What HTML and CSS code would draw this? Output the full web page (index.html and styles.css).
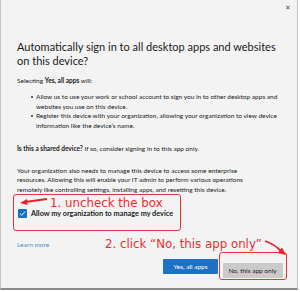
FILE: index.html
```html
<!DOCTYPE html>
<html lang="en">
<head>
    <meta charset="UTF-8">
    <title>Automatically sign in</title>
    <link rel="stylesheet" href="styles.css">
</head>
<body>
    <div class="dialog">
        <div class="close">&#x2715;</div>
        <h1 class="title">Automatically sign in to all desktop apps and websites on this device?</h1>
        <p class="intro">Selecting <b>Yes, all apps</b> will:</p>
        <ul class="points">
            <li>Allow us to use your work or school account to sign you in to other desktop apps and websites you use on this device.</li>
            <li>Register this device with your organization, allowing your organization to view device information like the device’s name.</li>
        </ul>
        <p class="shared"><b>Is this a shared device?</b> If so, consider signing in to this app only.</p>
        <p class="manage">Your organization also needs to manage this device to access some enterprise resources. Allowing this will enable your IT admin to perform various operations remotely like controlling settings, installing apps, and resetting this device.</p>

        <div class="mark-box">
            <div class="note note-one">1. uncheck the box</div>
            <svg class="arrow arrow-one" width="30" height="10" viewBox="0 0 30 10">
                <path d="M28 2 L6 5" stroke="#e8232a" stroke-width="1.8" fill="none"/>
                <path d="M1 6 L8 2 L8.5 8 Z" fill="#e8232a"/>
            </svg>
            <label class="check-row">
                <span class="checkbox">
                    <svg width="9" height="9" viewBox="0 0 9 9"><path d="M2 4.6 L3.8 6.3 L7 2.6" stroke="#fff" stroke-width="0.9" fill="none"/></svg>
                </span>
                <span class="check-label">Allow my organization to manage my device</span>
            </label>
        </div>

        <div class="link-row">
            <a class="learn">Learn more</a>
            <span class="note note-two">2. click “No, this app only”</span>
        </div>
        <svg class="arrow arrow-two" width="24" height="18" viewBox="0 0 24 18">
            <path d="M1 2 Q10 5 17 12" stroke="#e8232a" stroke-width="1.8" fill="none"/>
            <path d="M22 16 L13.5 14 L18 8.5 Z" fill="#e8232a"/>
        </svg>

        <div class="actions">
            <button class="btn btn-primary">Yes, all apps</button>
            <div class="mark-btn">
                <button class="btn btn-plain">No, this app only</button>
            </div>
        </div>
    </div>
</body>
</html>
```

FILE: styles.css
```css
body, html {
    margin: 0;
    padding: 0;
    background-color: #ffffff;
    font-family: Lato, "Noto Sans", sans-serif;
    color: #1b1b1b;
}

.dialog {
    position: relative;
    width: 298px;
    height: 290px;
    box-sizing: border-box;
    padding: 0 0 0 16px;
    background-color: #f3f3f3;
    border-left: 1px solid #c4c4c4;
    border-right: 1px solid #c4c4c4;
    border-bottom: 2px solid #8a8a8a;
    overflow: hidden;
}

.close {
    position: absolute;
    top: 3px;
    right: 6px;
    font-size: 7px;
    color: #555;
}

.title {
    margin: 40px 0 0 0;
    font-size: 11px;
    line-height: 14px;
    font-weight: 400;
    width: 270px;
}

.intro {
    margin: 8px 0 0 0;
    font-size: 6.5px;
    line-height: 10px;
}

.points {
    margin: 6px 0 0 0;
    padding-left: 19px;
    width: 250px;
    font-size: 6.5px;
    line-height: 9.7px;
    list-style: none;
}

.points li {
    position: relative;
}

.points li::before {
    content: "";
    position: absolute;
    left: -5px;
    top: 4px;
    width: 2px;
    height: 2px;
    border-radius: 50%;
    background-color: #333;
}

.shared {
    margin: 13px 0 0 0;
    font-size: 6.5px;
    line-height: 10px;
}

.manage {
    margin: 12px 0 0 0;
    font-size: 6.5px;
    line-height: 9.5px;
    width: 250px;
}

.mark-box {
    position: relative;
    margin: 0 0 0 -4px;
    width: 168px;
    height: 37px;
    box-sizing: border-box;
    border: 1.5px solid #e8353a;
    border-radius: 3px;
    padding: 1px 0 0 4px;
}

.note {
    font-family: "DejaVu Sans", sans-serif;
    color: #ee2b2f;
    font-size: 11.8px;
    line-height: 14px;
    white-space: nowrap;
}

.note-one {
    margin-left: 32px;
}

.arrow {
    position: absolute;
}

.arrow-one {
    left: 5px;
    top: 2px;
}

.check-row {
    display: flex;
    align-items: center;
    gap: 4px;
    margin-top: -1px;
}

.checkbox {
    display: flex;
    width: 9px;
    height: 9px;
    background-color: #1a6fc4;
    border-radius: 1px;
}

.check-label {
    font-size: 7.3px;
    font-weight: 700;
}

.link-row {
    display: flex;
    align-items: center;
    justify-content: space-between;
    margin-top: 6px;
    width: 245px;
}

.learn {
    font-size: 6.5px;
    color: #4d8fce;
}

.arrow-two {
    left: 263px;
    top: 239px;
}

.actions {
    display: flex;
    align-items: center;
    gap: 1px;
    margin: 1px 0 0 146px;
}

.btn {
    font-family: Lato, "Noto Sans", sans-serif;
    font-size: 6.5px;
    height: 15px;
    border: none;
    padding: 0;
    border-radius: 1px;
}

.btn-primary {
    width: 55px;
    background-color: #1d70c4;
    color: #fff;
}

.mark-btn {
    border: 1.5px solid #e8353a;
    border-radius: 3px;
    padding: 3.5px 3.5px 1.5px 2.5px;
}

.btn-plain {
    width: 60px;
    background-color: #cacaca;
    color: #1b1b1b;
}
```
